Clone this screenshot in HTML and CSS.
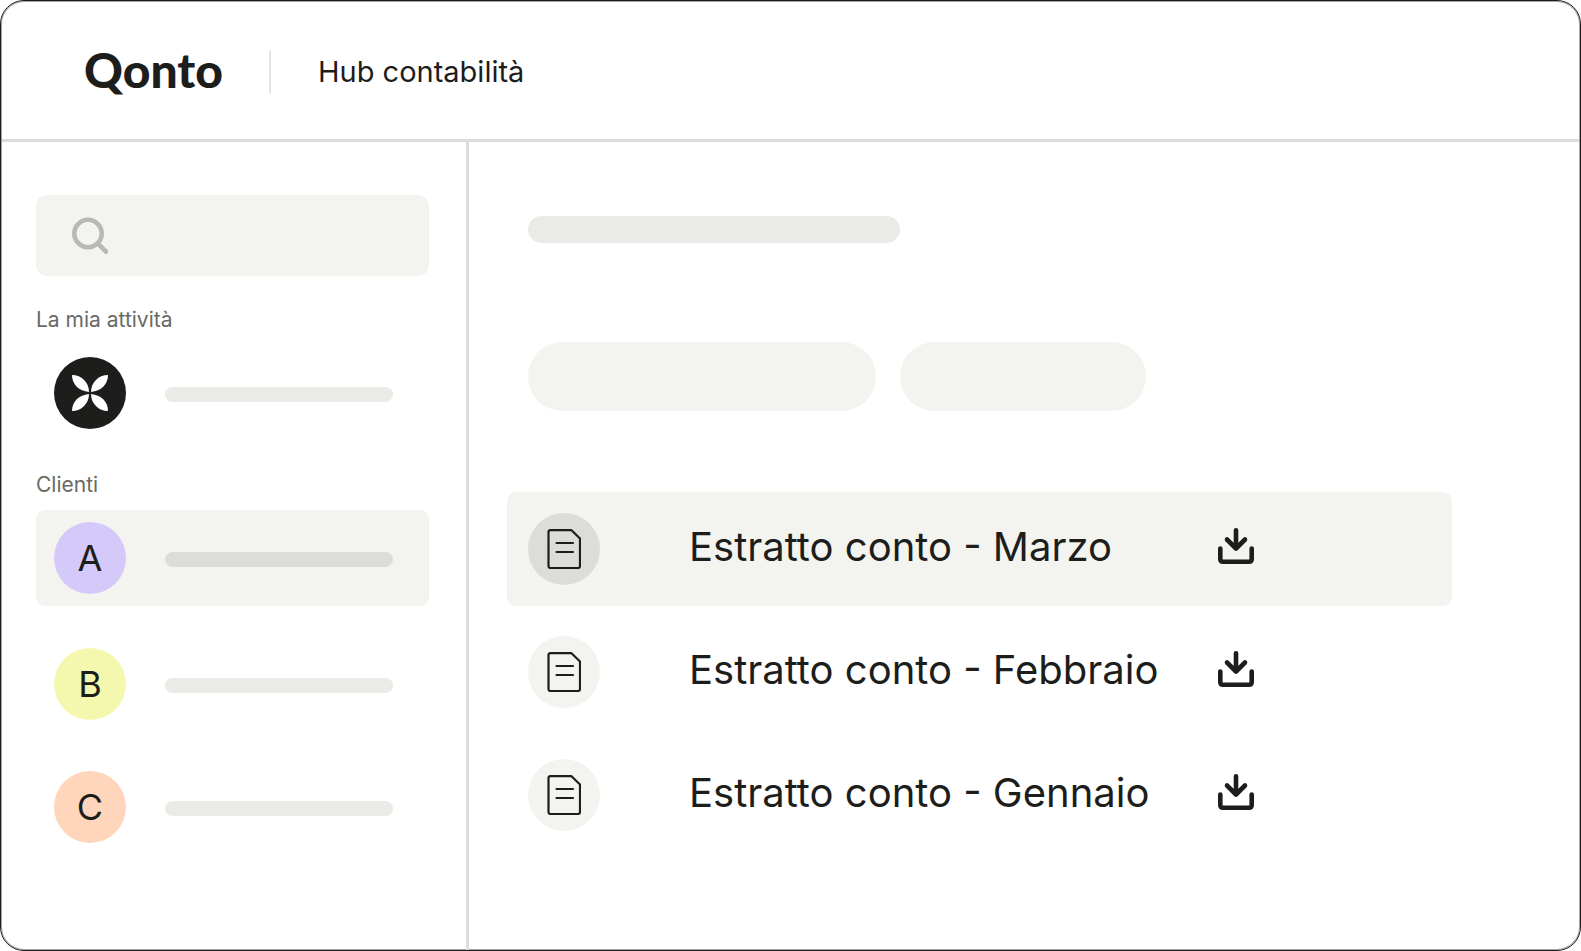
FILE: index.html
```
<!DOCTYPE html>
<html lang="it">

<head>
    <meta charset="UTF-8">
    <meta name="viewport" content="width=device-width, initial-scale=1.0">
    <title>Qonto - Hub contabilità</title>
    <link rel="stylesheet" href="styles.css">
</head>

<body>
    <!-- shared icons -->
    <svg class="sprite" aria-hidden="true">
        <symbol id="icon-document" viewBox="0 0 34 40">
            <path d="M4 1.200H24.500L33 9.500V37Q33 39 31 39H3.500Q1.500 39 1.500 37V3.200Q1.500 1.200 3.500 1.200Z" />
            <path d="M9.500 14H26M9.500 23H26" />
        </symbol>
        <symbol id="icon-download" viewBox="0 0 36 36">
            <path d="M18 2.300V20M9 11.500L18 20.500L27 11.500" />
            <path d="M2.300 20.500V31Q2.300 33.700 5 33.700H31Q33.700 33.700 33.700 31V20.500" />
        </symbol>
    </svg>

    <div class="window">
        <header class="header">
            <a class="logo" href="#">Qonto</a>
            <h1 class="title">Hub contabilità</h1>
        </header>

        <div class="content">
            <aside class="sidebar">
                <label class="search">
                    <svg class="search-icon" viewBox="0 0 36 37" aria-hidden="true">
                        <circle cx="16" cy="16.500" r="13.700" />
                        <path d="M26 26.700L34 34.700" />
                    </svg>
                    <input type="search" aria-label="Cerca">
                </label>

                <h2 class="section-title">La mia attività</h2>
                <a class="account" href="#" aria-label="La mia attività">
                    <span class="avatar avatar-dark">
                        <svg viewBox="0 0 36 36" aria-hidden="true">
                            <path d="M0 0C9.500 0 17 7.500 17 17C7 16 0 9.500 0 0Z" />
                            <path d="M36 0C26.500 0 19 7.500 19 17C29 16 36 9.500 36 0Z" />
                            <path d="M0 36C9.500 36 17 28.500 17 19C7 20 0 26.500 0 36Z" />
                            <path d="M36 36C26.500 36 19 28.500 19 19C29 20 36 26.500 36 36Z" />
                        </svg>
                    </span>
                    <span class="line"></span>
                </a>

                <h2 class="section-title">Clienti</h2>
                <nav class="clients">
                    <a class="account active" href="#">
                        <span class="avatar avatar-purple">A</span>
                        <span class="line"></span>
                    </a>
                    <a class="account" href="#">
                        <span class="avatar avatar-yellow">B</span>
                        <span class="line"></span>
                    </a>
                    <a class="account" href="#">
                        <span class="avatar avatar-orange">C</span>
                        <span class="line"></span>
                    </a>
                </nav>
            </aside>

            <main class="main">
                <div class="heading-line"></div>
                <div class="filters">
                    <span class="filter filter-wide"></span>
                    <span class="filter"></span>
                </div>

                <ul class="statements">
                    <li class="statement active">
                        <span class="doc"><svg aria-hidden="true"><use href="#icon-document" /></svg></span>
                        <span class="name">Estratto conto - Marzo</span>
                        <button class="download" type="button" aria-label="Scarica Marzo"><svg><use href="#icon-download" /></svg></button>
                    </li>
                    <li class="statement">
                        <span class="doc"><svg aria-hidden="true"><use href="#icon-document" /></svg></span>
                        <span class="name">Estratto conto - Febbraio</span>
                        <button class="download" type="button" aria-label="Scarica Febbraio"><svg><use href="#icon-download" /></svg></button>
                    </li>
                    <li class="statement">
                        <span class="doc"><svg aria-hidden="true"><use href="#icon-document" /></svg></span>
                        <span class="name">Estratto conto - Gennaio</span>
                        <button class="download" type="button" aria-label="Scarica Gennaio"><svg><use href="#icon-download" /></svg></button>
                    </li>
                </ul>
            </main>
        </div>
    </div>
</body>

</html>
```
FILE: styles.css
```
* {
    margin: 0;
    padding: 0;
    box-sizing: border-box;
}

body {
    font-family: Inter, "Liberation Sans", sans-serif;
    background-color: #fff;
    color: #1d1d1b;
}

a {
    color: inherit;
    text-decoration: none;
}

.sprite {
    display: none;
}

.window {
    display: flex;
    flex-direction: column;
    min-height: 100vh;
    border: 1px solid #1d1d1b;
    border-radius: 24px;
    box-shadow: inset 0 0 0 1px #a5a5a4;
    padding: 0 1px;
}

/* Header */
.header {
    display: flex;
    align-items: center;
    height: 141px;
    padding: 3px 0 0 82px;
    border-bottom: 3px solid #dcddd8;
}

.logo {
    width: 185px;
    padding-bottom: 4px;
    font-family: Lato, sans-serif;
    font-size: 48px;
    font-weight: 900;
    line-height: 60px;
}

.title {
    padding-left: 47px;
    border-left: 2px solid #e3e4e0;
    font-size: 29px;
    font-weight: 400;
    line-height: 42px;
}

.content {
    display: flex;
    flex: 1;
}

/* Sidebar */
.sidebar {
    flex: none;
    width: 467px;
    padding: 53px 37px 24px 34px;
    border-right: 3px solid #dcddd8;
}

.search {
    display: flex;
    align-items: center;
    height: 81px;
    padding: 0 36px;
    border-radius: 11px;
    background-color: #f3f4ef;
}

.search-icon {
    flex: none;
    width: 36px;
    height: 37px;
    fill: none;
    stroke: #b8b9b4;
    stroke-width: 4.600;
    stroke-linecap: round;
}

.search input {
    flex: 1;
    min-width: 0;
    padding-left: 16px;
    border: none;
    outline: none;
    background: none;
    font-family: inherit;
    font-size: 21px;
}

.section-title {
    margin-top: 30px;
    color: #696a65;
    font-size: 21px;
    font-weight: 400;
    line-height: 27px;
}

.account {
    display: flex;
    align-items: center;
    height: 96px;
    margin-top: 12px;
    padding: 0 36px 0 18px;
    border-radius: 9px;
}

.clients {
    display: flex;
    flex-direction: column;
    gap: 27px;
    margin-top: 12px;
}

.clients .account {
    margin-top: 0;
}

.clients .active {
    margin-bottom: 3px;
}

.avatar {
    display: flex;
    justify-content: center;
    align-items: center;
    flex: none;
    width: 72px;
    height: 72px;
    margin-right: 39px;
    border-radius: 50%;
    font-size: 36px;
}

.avatar svg {
    width: 36px;
    height: 36px;
    fill: #fff;
}

.avatar-dark {
    background-color: #1d1d1b;
}

.avatar-purple {
    background-color: #d5c9fa;
}

.avatar-yellow {
    background-color: #f3f8ae;
}

.avatar-orange {
    background-color: #ffd5bc;
}

.line {
    flex: 1;
    height: 15px;
    margin-top: 3px;
    border-radius: 8px;
    background-color: #eaebe6;
}

.active {
    background-color: #f3f4ef;
}

.active .line,
.active .doc {
    background-color: #dcddd8;
}

/* Statements */
.main {
    flex: 1;
    padding: 74px 127px 24px 38px;
}

.heading-line {
    width: 372px;
    height: 27px;
    margin-left: 21px;
    border-radius: 14px;
    background-color: #eaebe6;
}

.filters {
    display: flex;
    gap: 24px;
    margin: 99px 0 81px 21px;
}

.filter {
    width: 246px;
    height: 69px;
    border-radius: 35px;
    background-color: #f3f4ef;
}

.filter-wide {
    width: 348px;
}

.statements {
    display: flex;
    flex-direction: column;
    gap: 9px;
    list-style: none;
}

.statement {
    display: grid;
    grid-template-columns: 72px 1fr 36px;
    align-items: center;
    height: 114px;
    padding: 0 198px 0 21px;
    border-radius: 9px;
}

.doc {
    display: flex;
    justify-content: center;
    align-items: center;
    width: 72px;
    height: 72px;
    border-radius: 50%;
    background-color: #f3f4ef;
}

.doc svg {
    width: 34px;
    height: 40px;
    fill: none;
    stroke: #1d1d1b;
    stroke-width: 2.200;
    stroke-linecap: round;
    stroke-linejoin: round;
}

.name {
    padding: 0 0 5px 89px;
    font-size: 40px;
    line-height: 48px;
    white-space: nowrap;
}

.download {
    padding-bottom: 6px;
    border: none;
    background: none;
    cursor: pointer;
}

.download svg {
    display: block;
    width: 36px;
    height: 36px;
    fill: none;
    stroke: #1d1d1b;
    stroke-width: 4.600;
    stroke-linecap: round;
    stroke-linejoin: round;
}
```
